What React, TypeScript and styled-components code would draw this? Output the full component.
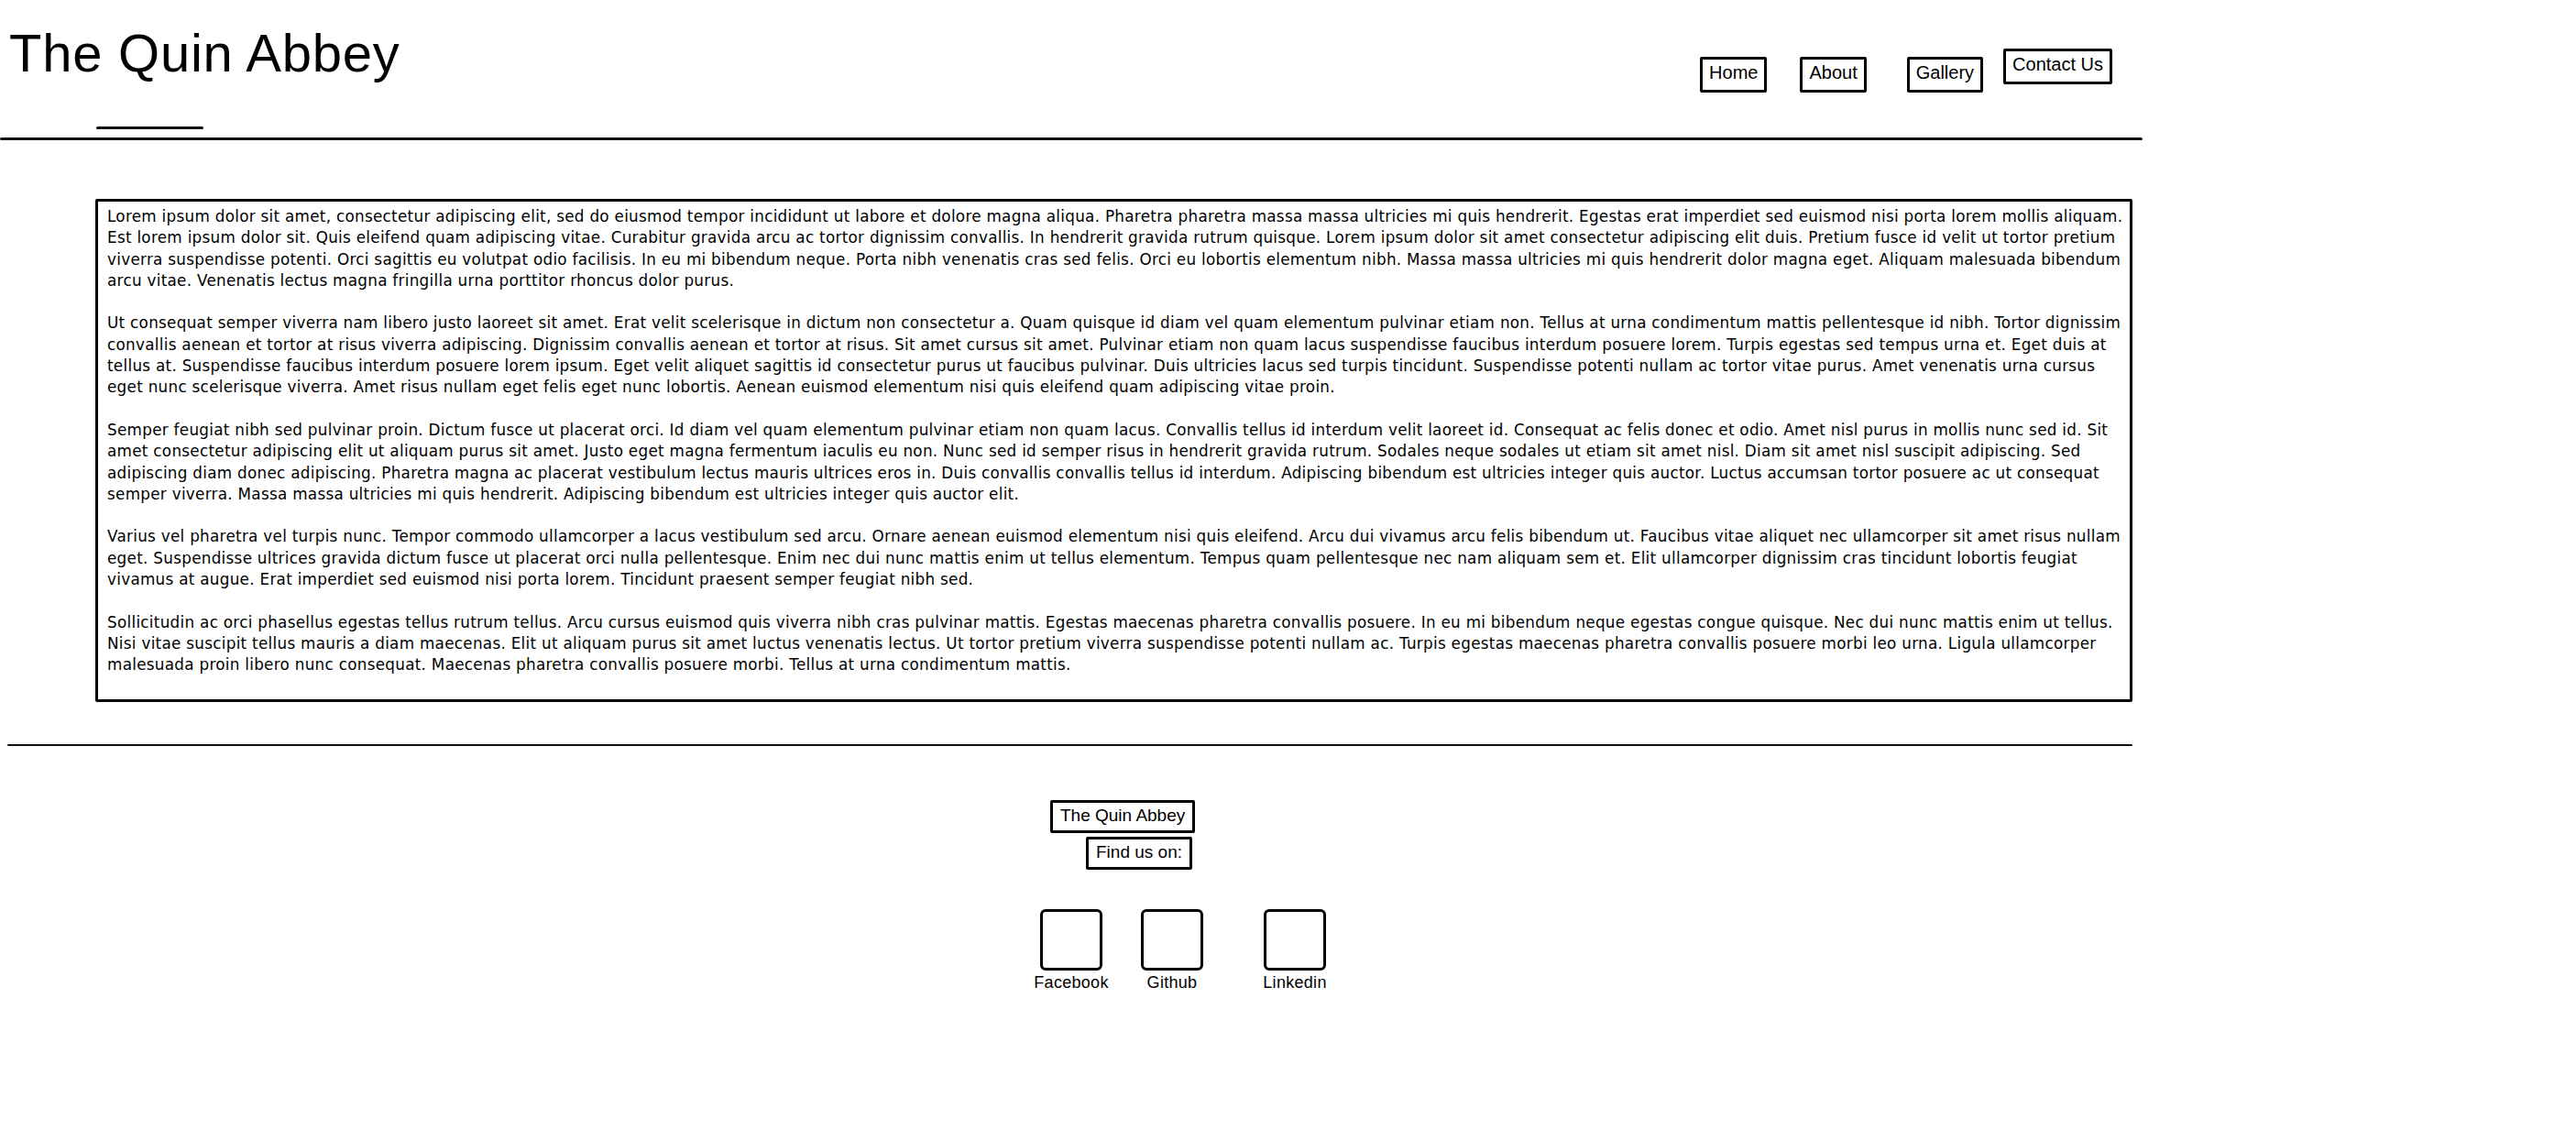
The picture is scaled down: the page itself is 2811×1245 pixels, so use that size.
import React from "react";
import styled, { createGlobalStyle } from "styled-components";

const GlobalStyle = createGlobalStyle`
  html, body {
    margin: 0;
    padding: 0;
    background: #ffffff;
  }
  body {
    font-family: "Liberation Sans", Arial, sans-serif;
    color: #000000;
  }
`;

const Page = styled.div`
  width: 2338px;
  display: flex;
  flex-direction: column;
  padding-bottom: 120px;
`;

const Header = styled.header`
  display: flex;
  align-items: flex-start;
`;

const Brand = styled.div`
  display: flex;
  flex-direction: column;
  align-items: flex-start;
`;

const Title = styled.h1`
  margin: 0;
  padding: 29px 0 0 10px;
  font: 400 58px/58px "Liberation Sans", Arial, sans-serif;
  letter-spacing: 0.75px;
`;

const TitleMark = styled.span`
  display: block;
  width: 117px;
  height: 3px;
  background: #111;
  border-radius: 2px;
  margin: 51px 0 9px 105px;
`;

const Nav = styled.nav`
  margin-left: auto;
  margin-right: 33px;
  padding-top: 62px;
  display: flex;
  align-items: flex-start;
`;

const NavButton = styled.a<{ $gap?: number; $lift?: number }>`
  margin-left: ${(p) => p.$gap ?? 0}px;
  margin-top: ${(p) => -(p.$lift ?? 0)}px;
  border: 3px solid #000;
  border-radius: 2px;
  padding: 3px 7px 8px;
  font: 400 20px/22px "Liberation Sans", Arial, sans-serif;
  color: #000;
  text-decoration: none;
  white-space: nowrap;
`;

const Rule = styled.div<{ $inset: number; $length: number; $thick: number; $top: number }>`
  margin-top: ${(p) => p.$top}px;
  margin-left: ${(p) => p.$inset}px;
  width: ${(p) => p.$length}px;
  height: ${(p) => p.$thick}px;
  background: #111;
  border-radius: 2px;
`;

const Content = styled.main`
  margin: 64px 0 0 104px;
  width: 2223px;
  box-sizing: border-box;
  border: 3px solid #000;
  border-radius: 2px;
  padding: 5px 10px 25px 10px;
  font: 400 16.8px/23.3px "DejaVu Sans", "Liberation Sans", sans-serif;
  letter-spacing: 0.29px;
`;

const Para = styled.p`
  margin: 0 0 23.3px;
  &:last-child {
    margin-bottom: 0;
  }
`;

const Line = styled.span`
  display: block;
  white-space: nowrap;
`;

const Footer = styled.footer`
  display: flex;
  flex-direction: column;
  align-items: flex-start;
  margin-top: 59px;
`;

const FooterBadge = styled.div<{ $indent: number; $top?: number }>`
  margin-left: ${(p) => p.$indent}px;
  margin-top: ${(p) => p.$top ?? 0}px;
  border: 3px solid #000;
  border-radius: 2px;
  padding: 3px 8px 5px;
  font: 400 19px/22px "Liberation Sans", Arial, sans-serif;
  white-space: nowrap;
`;

const Socials = styled.div`
  display: flex;
  align-items: flex-start;
  margin: 43px 0 0 1129px;
`;

const SocialItem = styled.a<{ $gap?: number }>`
  width: 80px;
  margin-left: ${(p) => p.$gap ?? 0}px;
  display: flex;
  flex-direction: column;
  align-items: center;
  color: #000;
  text-decoration: none;
`;

const SocialIcon = styled.span`
  display: block;
  width: 68px;
  height: 67px;
  box-sizing: border-box;
  border: 3px solid #000;
  border-radius: 6px;
`;

const SocialLabel = styled.span`
  margin-top: 3px;
  font: 400 18px/20px "Liberation Sans", Arial, sans-serif;
  letter-spacing: 0.3px;
  white-space: nowrap;
`;

const paragraphs: string[][] = [
  [
    "Lorem ipsum dolor sit amet, consectetur adipiscing elit, sed do eiusmod tempor incididunt ut labore et dolore magna aliqua. Pharetra pharetra massa massa ultricies mi quis hendrerit. Egestas erat imperdiet sed euismod nisi porta lorem mollis aliquam.",
    "Est lorem ipsum dolor sit. Quis eleifend quam adipiscing vitae. Curabitur gravida arcu ac tortor dignissim convallis. In hendrerit gravida rutrum quisque. Lorem ipsum dolor sit amet consectetur adipiscing elit duis. Pretium fusce id velit ut tortor pretium",
    "viverra suspendisse potenti. Orci sagittis eu volutpat odio facilisis. In eu mi bibendum neque. Porta nibh venenatis cras sed felis. Orci eu lobortis elementum nibh. Massa massa ultricies mi quis hendrerit dolor magna eget. Aliquam malesuada bibendum",
    "arcu vitae. Venenatis lectus magna fringilla urna porttitor rhoncus dolor purus.",
  ],
  [
    "Ut consequat semper viverra nam libero justo laoreet sit amet. Erat velit scelerisque in dictum non consectetur a. Quam quisque id diam vel quam elementum pulvinar etiam non. Tellus at urna condimentum mattis pellentesque id nibh. Tortor dignissim",
    "convallis aenean et tortor at risus viverra adipiscing. Dignissim convallis aenean et tortor at risus. Sit amet cursus sit amet. Pulvinar etiam non quam lacus suspendisse faucibus interdum posuere lorem. Turpis egestas sed tempus urna et. Eget duis at",
    "tellus at. Suspendisse faucibus interdum posuere lorem ipsum. Eget velit aliquet sagittis id consectetur purus ut faucibus pulvinar. Duis ultricies lacus sed turpis tincidunt. Suspendisse potenti nullam ac tortor vitae purus. Amet venenatis urna cursus",
    "eget nunc scelerisque viverra. Amet risus nullam eget felis eget nunc lobortis. Aenean euismod elementum nisi quis eleifend quam adipiscing vitae proin.",
  ],
  [
    "Semper feugiat nibh sed pulvinar proin. Dictum fusce ut placerat orci. Id diam vel quam elementum pulvinar etiam non quam lacus. Convallis tellus id interdum velit laoreet id. Consequat ac felis donec et odio. Amet nisl purus in mollis nunc sed id. Sit",
    "amet consectetur adipiscing elit ut aliquam purus sit amet. Justo eget magna fermentum iaculis eu non. Nunc sed id semper risus in hendrerit gravida rutrum. Sodales neque sodales ut etiam sit amet nisl. Diam sit amet nisl suscipit adipiscing. Sed",
    "adipiscing diam donec adipiscing. Pharetra magna ac placerat vestibulum lectus mauris ultrices eros in. Duis convallis convallis tellus id interdum. Adipiscing bibendum est ultricies integer quis auctor. Luctus accumsan tortor posuere ac ut consequat",
    "semper viverra. Massa massa ultricies mi quis hendrerit. Adipiscing bibendum est ultricies integer quis auctor elit.",
  ],
  [
    "Varius vel pharetra vel turpis nunc. Tempor commodo ullamcorper a lacus vestibulum sed arcu. Ornare aenean euismod elementum nisi quis eleifend. Arcu dui vivamus arcu felis bibendum ut. Faucibus vitae aliquet nec ullamcorper sit amet risus nullam",
    "eget. Suspendisse ultrices gravida dictum fusce ut placerat orci nulla pellentesque. Enim nec dui nunc mattis enim ut tellus elementum. Tempus quam pellentesque nec nam aliquam sem et. Elit ullamcorper dignissim cras tincidunt lobortis feugiat",
    "vivamus at augue. Erat imperdiet sed euismod nisi porta lorem. Tincidunt praesent semper feugiat nibh sed.",
  ],
  [
    "Sollicitudin ac orci phasellus egestas tellus rutrum tellus. Arcu cursus euismod quis viverra nibh cras pulvinar mattis. Egestas maecenas pharetra convallis posuere. In eu mi bibendum neque egestas congue quisque. Nec dui nunc mattis enim ut tellus.",
    "Nisi vitae suscipit tellus mauris a diam maecenas. Elit ut aliquam purus sit amet luctus venenatis lectus. Ut tortor pretium viverra suspendisse potenti nullam ac. Turpis egestas maecenas pharetra convallis posuere morbi leo urna. Ligula ullamcorper",
    "malesuada proin libero nunc consequat. Maecenas pharetra convallis posuere morbi. Tellus at urna condimentum mattis.",
  ],
];

const navItems = [
  { label: "Home", gap: 0, lift: 0 },
  { label: "About", gap: 36, lift: 0 },
  { label: "Gallery", gap: 44, lift: 0 },
  { label: "Contact Us", gap: 22, lift: 9 },
];

const socials = [
  { label: "Facebook", gap: 0 },
  { label: "Github", gap: 30 },
  { label: "Linkedin", gap: 54 },
];

export default function App() {
  return (
    <>
      <GlobalStyle />
      <Page>
        <Header>
          <Brand>
            <Title>The Quin Abbey</Title>
            <TitleMark />
          </Brand>
          <Nav>
            {navItems.map((n) => (
              <NavButton key={n.label} href="#" $gap={n.gap} $lift={n.lift}>
                {n.label}
              </NavButton>
            ))}
          </Nav>
        </Header>
        <Rule $inset={0} $length={2338} $thick={3} $top={0} />
        <Content>
          {paragraphs.map((p, i) => (
            <Para key={i}>
              {p.map((l, j) => (
                <Line key={j}>{l}</Line>
              ))}
            </Para>
          ))}
        </Content>
        <Rule $inset={8} $length={2319} $thick={2} $top={46} />
        <Footer>
          <FooterBadge $indent={1146}>The Quin Abbey</FooterBadge>
          <FooterBadge $indent={1185} $top={4}>
            Find us on:
          </FooterBadge>
          <Socials>
            {socials.map((s) => (
              <SocialItem key={s.label} href="#" $gap={s.gap}>
                <SocialIcon />
                <SocialLabel>{s.label}</SocialLabel>
              </SocialItem>
            ))}
          </Socials>
        </Footer>
      </Page>
    </>
  );
}
